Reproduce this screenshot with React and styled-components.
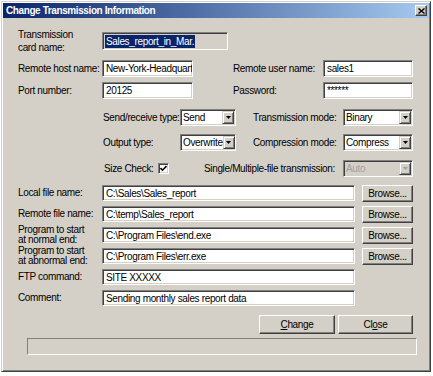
import styled, { createGlobalStyle } from "styled-components";

const GlobalStyle = createGlobalStyle`
  html, body {
    margin: 0;
    padding: 0;
    background: #ffffff;
  }
  body {
    font-family: "Liberation Sans", Arial, sans-serif;
  }
`;

const Window = styled.div`
  margin: 1px 0 0 1px;
  width: 430px;
  height: 371px;
  box-sizing: border-box;
  background: #d4d0c8;
  border: 1px solid;
  border-color: #d4d0c8 #404040 #404040 #d4d0c8;
  box-shadow: inset 1px 1px #ffffff, inset -1px -1px #808080;
  padding: 1px;
  display: flex;
  flex-direction: column;
  font-size: 10px;
  letter-spacing: -0.35px;
  color: #000000;
`;

const TitleBar = styled.div`
  height: 15px;
  flex-shrink: 0;
  background: linear-gradient(to right, #0a246a, #a6caf0);
  display: flex;
  align-items: center;
  justify-content: space-between;
  padding: 0 2px 0 3px;
  color: #ffffff;
  font-weight: bold;
  letter-spacing: -0.4px;
`;

const TitleClose = styled.div`
  width: 12px;
  height: 11px;
  box-sizing: border-box;
  background: #d4d0c8;
  border: 1px solid;
  border-color: #ffffff #404040 #404040 #ffffff;
  box-shadow: inset -1px -1px #808080;
  display: flex;
  align-items: center;
  justify-content: center;
`;

const Content = styled.div`
  display: flex;
  flex-direction: column;
  padding: 0 16px 0 15px;
`;

const Row = styled.div`
  display: flex;
  align-items: center;
  height: ${(p) => p.h || 17}px;
  margin-top: ${(p) => p.top}px;
  padding-left: ${(p) => p.indent || 0}px;
  justify-content: ${(p) => (p.end ? "flex-end" : "flex-start")};
  gap: ${(p) => p.gap || 0}px;
`;

const Label = styled.div`
  width: ${(p) => p.w}px;
  margin-left: ${(p) => p.ml || 0}px;
  flex-shrink: 0;
  line-height: ${(p) => p.lh || 12}px;
  white-space: nowrap;
`;

const Field = styled.div`
  width: ${(p) => p.w}px;
  height: ${(p) => p.h || 17}px;
  flex-shrink: 0;
  box-sizing: border-box;
  background: ${(p) => (p.readOnly ? "#d4d0c8" : "#ffffff")};
  border: 1px solid;
  border-color: #808080 #ffffff #ffffff #808080;
  box-shadow: inset 1px 1px #404040, inset -1px -1px #d4d0c8;
  padding: 0 2px 0 ${(p) => (p.readOnly ? 2 : 3)}px;
  display: flex;
  align-items: center;
  overflow: hidden;
  white-space: nowrap;
`;

const Selected = styled.span`
  background: #0a246a;
  color: #ffffff;
  line-height: 13px;
  padding: 0 1px;
`;

const Select = styled.div`
  width: ${(p) => p.w}px;
  height: 17px;
  flex-shrink: 0;
  box-sizing: border-box;
  background: ${(p) => (p.disabled ? "#d4d0c8" : "#ffffff")};
  color: ${(p) => (p.disabled ? "#a0a0a0" : "#000000")};
  border: 1px solid;
  border-color: #808080 #ffffff #ffffff #808080;
  box-shadow: inset 1px 1px #404040, inset -1px -1px #d4d0c8;
  padding: 1px 1px 1px 2px;
  display: flex;
  align-items: center;
  justify-content: space-between;
  white-space: nowrap;
  overflow: hidden;
`;

const DropButton = styled.span`
  width: 12px;
  height: 100%;
  box-sizing: border-box;
  background: #d4d0c8;
  border: 1px solid;
  border-color: #d4d0c8 #404040 #404040 #d4d0c8;
  box-shadow: inset 1px 1px #ffffff, inset -1px -1px #808080;
  display: flex;
  align-items: center;
  justify-content: center;
  flex-shrink: 0;
`;

const CheckBox = styled.div`
  width: 11px;
  height: 11px;
  flex-shrink: 0;
  box-sizing: border-box;
  background: #ffffff;
  border: 1px solid;
  border-color: #808080 #ffffff #ffffff #808080;
  box-shadow: inset 1px 1px #404040, inset -1px -1px #d4d0c8;
  display: flex;
  align-items: center;
  justify-content: center;
`;

const Button = styled.div`
  width: ${(p) => p.w}px;
  height: ${(p) => p.h || 17}px;
  margin-left: ${(p) => p.ml || 0}px;
  flex-shrink: 0;
  box-sizing: border-box;
  background: #d4d0c8;
  border: 1px solid;
  border-color: #ffffff #404040 #404040 #ffffff;
  box-shadow: inset -1px -1px #808080;
  display: flex;
  align-items: center;
  justify-content: center;
  white-space: nowrap;
`;

const StatusBar = styled.div`
  height: 17px;
  margin: 4px -4px 0 9px;
  box-sizing: border-box;
  border: 1px solid;
  border-color: #808080 #ffffff #ffffff #808080;
`;

const Arrow = ({ disabled }) => (
  <svg width="5" height="3" viewBox="0 0 5 3">
    <path d="M0 0H5L2.5 3Z" fill={disabled ? "#a0a0a0" : "#000000"} />
  </svg>
);

const Dropdown = ({ w, value, disabled }) => (
  <Select w={w} disabled={disabled}>
    <span>{value}</span>
    <DropButton>
      <Arrow disabled={disabled} />
    </DropButton>
  </Select>
);

const fileRows = [
  { label: "Local file name:", value: "C:\\Sales\\Sales_report", browse: true },
  { label: "Remote file name:", value: "C:\\temp\\Sales_report", browse: true },
  {
    label: ["Program to start", "at normal end:"],
    value: "C:\\Program Files\\end.exe",
    browse: true,
  },
  {
    label: ["Program to start", "at abnormal end:"],
    value: "C:\\Program Files\\err.exe",
    browse: true,
  },
  { label: "FTP command:", value: "SITE XXXXX" },
  { label: "Comment:", value: "Sending monthly sales report data" },
];

export default function App() {
  return (
    <>
      <GlobalStyle />
      <Window>
        <TitleBar>
          <span>Change Transmission Information</span>
          <TitleClose>
            <svg width="7" height="6" viewBox="0 0 7 6">
              <path d="M0.5 0.5L6.5 5.5M6.5 0.5L0.5 5.5" stroke="#000" strokeWidth="1.4" />
            </svg>
          </TitleClose>
        </TitleBar>
        <Content>
          <Row top={8} h={30}>
            <Label w={84} lh={13}>
              Transmission
              <br />
              card name:
            </Label>
            <Field w={126} h={18} readOnly>
              <Selected>Sales_report_in_Mar.</Selected>
            </Field>
          </Row>
          <Row top={4}>
            <Label w={84}>Remote host name:</Label>
            <Field w={91}>New-York-Headquart</Field>
            <Label w={90} ml={40}>
              Remote user name:
            </Label>
            <Field w={90}>sales1</Field>
          </Row>
          <Row top={5}>
            <Label w={84}>Port number:</Label>
            <Field w={91}>20125</Field>
            <Label w={90} ml={40}>
              Password:
            </Label>
            <Field w={90}>******</Field>
          </Row>
          <Row top={10} indent={85}>
            <Label w={77}>Send/receive type:</Label>
            <Dropdown w={56} value="Send" />
            <Label w={90} ml={17}>
              Transmission mode:
            </Label>
            <Dropdown w={70} value="Binary" />
          </Row>
          <Row top={8} indent={85}>
            <Label w={77}>Output type:</Label>
            <Dropdown w={56} value="Overwrite" />
            <Label w={90} ml={17}>
              Compression mode:
            </Label>
            <Dropdown w={70} value="Compress" />
          </Row>
          <Row top={9} indent={86}>
            <Label w={54}>Size Check:</Label>
            <CheckBox>
              <svg width="7" height="7" viewBox="0 0 7 7">
                <path d="M0.5 3L2.5 5.2L6.5 1" fill="none" stroke="#000" strokeWidth="1.6" />
              </svg>
            </CheckBox>
            <Label w={139} ml={35}>
              Single/Multiple-file transmission:
            </Label>
            <Dropdown w={70} value="Auto" disabled />
          </Row>
          {fileRows.map((r, i) => (
            <Row key={i} top={i === 0 ? 8 : 5} h={16}>
              {Array.isArray(r.label) ? (
                <Label w={84} lh={10}>
                  {r.label[0]}
                  <br />
                  {r.label[1]}
                </Label>
              ) : (
                <Label w={84}>{r.label}</Label>
              )}
              <Field w={253} h={16}>
                {r.value}
              </Field>
              {r.browse && (
                <Button w={51} ml={7}>
                  Browse...
                </Button>
              )}
            </Row>
          ))}
          <Row top={9} h={19} end gap={3}>
            <Button w={76} h={19}>
              <u>C</u>hange
            </Button>
            <Button w={75} h={19}>
              Cl<u>o</u>se
            </Button>
          </Row>
          <StatusBar />
        </Content>
      </Window>
    </>
  );
}
